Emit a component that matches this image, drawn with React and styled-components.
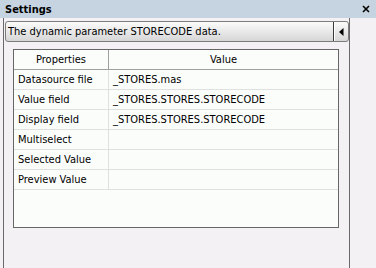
import styled, { createGlobalStyle } from 'styled-components';

const Global = createGlobalStyle`
	html, body {
		margin: 0;
		padding: 0;
		background: #f3f1f4;
	}
	body {
		font-family: "DejaVu Sans Condensed", "DejaVu Sans", sans-serif;
		font-stretch: condensed;
		font-size: 11px;
		color: #000;
	}
`;

const rows = [
	{ name: 'Datasource file', value: '_STORES.mas' },
	{ name: 'Value field', value: '_STORES.STORES.STORECODE' },
	{ name: 'Display field', value: '_STORES.STORES.STORECODE' },
	{ name: 'Multiselect', value: '' },
	{ name: 'Selected Value', value: '' },
	{ name: 'Preview Value', value: '' },
];

const App = () => {
	return (
		<Window>
			<Global />
			<TitleBar>
				<Title>Settings</Title>
				<svg width="8" height="8" viewBox="0 0 8 8">
					<path d="M1 1 L7 7 M7 1 L1 7" stroke="#000" strokeWidth="1.6" />
				</svg>
			</TitleBar>
			<Panel>
				<DescBar>
					<DescText>The dynamic parameter STORECODE data.</DescText>
					<Collapse>
						<svg width="5" height="8" viewBox="0 0 5 8">
							<path d="M4.5 0 L0 4 L4.5 8 Z" fill="#000" />
						</svg>
					</Collapse>
				</DescBar>
				<Grid>
					<HeadCell>Properties</HeadCell>
					<HeadCell last>Value</HeadCell>
					{rows.map((r) => (
						<Row key={r.name}>
							<Cell>{r.name}</Cell>
							<Cell last>{r.value}</Cell>
						</Row>
					))}
				</Grid>
			</Panel>
		</Window>
	);
};

let Window = styled.div`
	width: 376px;
	height: 268px;
	overflow: hidden;
	background: #f3f1f4;
	display: flex;
	flex-direction: column;
`;

let TitleBar = styled.div`
	height: 18px;
	flex-shrink: 0;
	background: #c5d4e0;
	display: flex;
	align-items: center;
	justify-content: space-between;
	padding: 0 6px 0 5px;
`;

let Title = styled.span`
	font-weight: bold;
	font-size: 11px;
`;

let Panel = styled.div`
	margin-left: 3px;
	width: 345px;
	flex: 1;
	border-left: 1px solid #6a6a6a;
	border-right: 1px solid #6a6a6a;
	padding-top: 3px;
	display: flex;
	flex-direction: column;
`;

let DescBar = styled.div`
	height: 19px;
	margin: 0 0 0 1px;
	border: 1px solid #7c7c7c;
	border-radius: 3px;
	background: linear-gradient(#fbfbfb, #e9e9e9 50%, #d6d6d6);
	display: flex;
	align-items: center;
	justify-content: space-between;
`;

let DescText = styled.span`
	padding-left: 2px;
	white-space: nowrap;
`;

let Collapse = styled.div`
	height: 100%;
	width: 12px;
	border-left: 1px solid #3a3a3a;
	box-shadow: inset 1px 0 0 #ffffff;
	display: flex;
	align-items: center;
	justify-content: center;
	padding-left: 1px;
	margin-right: 1px;
`;

let Grid = styled.div`
	margin: 7px 0 0 9px;
	width: 324px;
	height: 177px;
	border: 1px solid #666666;
	background: #fbfdfb;
	display: grid;
	grid-template-columns: 95px 1fr;
	grid-auto-rows: 20px;
	align-content: start;
`;

let Row = styled.div`
	display: contents;
`;

let HeadCell = styled.div`
	display: flex;
	align-items: center;
	justify-content: center;
	border-bottom: 1px solid #a0a0a0;
	border-right: ${(p) => (p.last ? 'none' : '1px solid #a0a0a0')};
`;

let Cell = styled.div`
	display: flex;
	align-items: center;
	padding-left: 4px;
	white-space: nowrap;
	border-bottom: 1px solid #e0e0e0;
	border-right: ${(p) => (p.last ? 'none' : '1px solid #e0e0e0')};
`;

export default App;
